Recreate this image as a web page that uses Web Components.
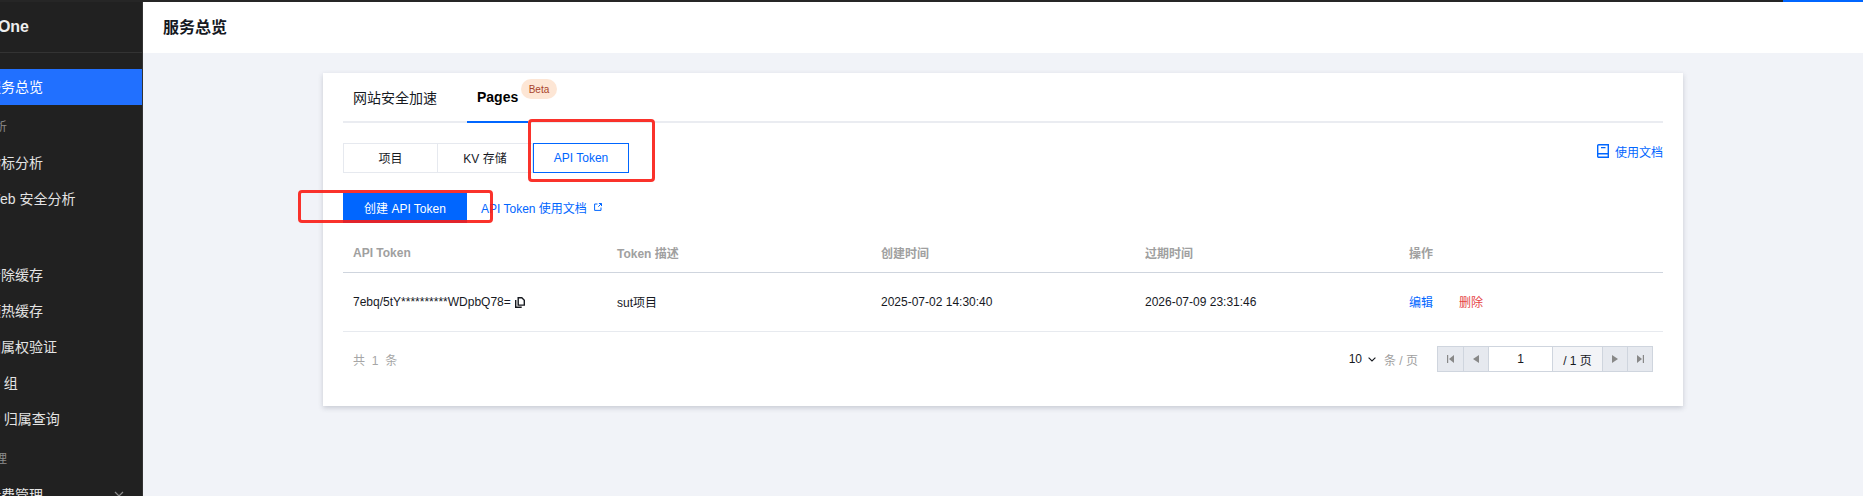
<!DOCTYPE html>
<html lang="zh">
<head>
<meta charset="utf-8">
<title>服务总览</title>
<style>
  html, body { margin: 0; height: 100%; overflow: hidden; }
  body { font-family: "Liberation Sans", "Noto Sans CJK SC", sans-serif; background: #f1f3f8; }
</style>
</head>
<body>
<app-shell>
  <side-nav slot="side">
    <nav-item active>服务总览</nav-item>
    <nav-label>数据分析</nav-label>
    <nav-item>指标分析</nav-item>
    <nav-item>Web 安全分析</nav-item>
    <nav-label></nav-label>
    <nav-item>清除缓存</nav-item>
    <nav-item>预热缓存</nav-item>
    <nav-item>归属权验证</nav-item>
    <nav-item>IP 组</nav-item>
    <nav-item>IP 归属查询</nav-item>
    <nav-label>计费管理</nav-label>
    <nav-item arrow>计费管理</nav-item>
  </side-nav>
  <page-header slot="head">服务总览</page-header>
  <pages-card></pages-card>
</app-shell>
<mark-box style="left:528px;top:119px;width:127px;height:63px"></mark-box>
<mark-box style="left:298px;top:190px;width:195px;height:33px"></mark-box>

<script>
/**
 * Page frame: dark strip on top, sidebar on the left, header and content on the right.
 */
class AppShell extends HTMLElement {
  constructor() {
    super();
    this.attachShadow({ mode: "open" }).innerHTML = `
      <style>
        :host { display: block; height: 100vh; overflow: hidden; }
        .strip { height: 2px; background: #262626; display: flex; justify-content: flex-end; }
        .strip i { width: 80px; background: #0066ff; }
        .body { display: flex; height: calc(100vh - 2px); }
        .main { flex: 1; min-width: 0; }
        .content { padding: 20px 0; }
      </style>
      <div class="strip"><i></i></div>
      <div class="body">
        <slot name="side"></slot>
        <div class="main">
          <slot name="head"></slot>
          <div class="content"><slot></slot></div>
        </div>
      </div>`;
  }
}

class SideNav extends HTMLElement {
  constructor() {
    super();
    this.attachShadow({ mode: "open" }).innerHTML = `
      <style>
        :host { display: block; width: 143px; flex: none; box-sizing: border-box; background: #212121; border-right: 1px solid #333; overflow: hidden; color: #e6e6e6; }
        .logo { height: 50px; display: flex; align-items: center; justify-content: flex-end; width: 29px; font-size: 16px; font-weight: 700; color: #eee; white-space: nowrap; }
        .head { border-bottom: 1px solid #333; }
        .items { padding-top: 16px; }
      </style>
      <div class="head"><div class="logo">One</div></div>
      <div class="items"><slot></slot></div>`;
  }
}

class NavItem extends HTMLElement {
  constructor() {
    super();
    const arrow = this.hasAttribute("arrow")
      ? `<svg width="10" height="6" viewBox="0 0 10 6"><path d="M1 1l4 4 4-4" fill="none" stroke="#8a8a8a" stroke-width="1.2"/></svg>`
      : "";
    this.attachShadow({ mode: "open" }).innerHTML = `
      <style>
        :host { display: flex; align-items: center; justify-content: space-between; height: 36px; box-sizing: border-box; padding-bottom: 2px; margin-left: -13px; padding-right: 18px; font-size: 14px; color: #e4e4e4; white-space: nowrap; }
        :host([active]) { background: #2170ff; color: #fff; }
      </style>
      <span><slot></slot></span>${arrow}`;
  }
}

class NavLabel extends HTMLElement {
  constructor() {
    super();
    this.attachShadow({ mode: "open" }).innerHTML = `
      <style>
        :host { display: flex; align-items: center; height: 40px; margin-left: -41px; font-size: 12px; color: #8c8c8c; white-space: nowrap; }
      </style>
      <slot></slot>`;
  }
}

class PageHeader extends HTMLElement {
  constructor() {
    super();
    this.attachShadow({ mode: "open" }).innerHTML = `
      <style>
        :host { display: flex; align-items: center; height: 51px; box-sizing: border-box; padding: 0 0 3px 20px; background: #fff; font-size: 16px; font-weight: 700; color: #16191f; }
      </style>
      <slot></slot>`;
  }
}

class PagesCard extends HTMLElement {
  constructor() {
    super();
    this.attachShadow({ mode: "open" }).innerHTML = `
      <style>
        :host { display: block; width: 1360px; height: 333px; margin: 0 auto; box-sizing: border-box; padding: 0 20px; background: #fff; box-shadow: 0 2px 5px rgba(54,58,80,.22); color: #16191f; font-size: 12px; }
        .tabs { display: flex; gap: 20px; height: 48px; border-bottom: 2px solid #eaecf1; }
        .tab { position: relative; display: flex; align-items: center; padding: 0 10px; height: 50px; box-sizing: border-box; font-size: 14px; }
        .tab.cn { padding-bottom: 2px; }
        .tab.on { font-weight: 700; color: #000; border-bottom: 2px solid #0066ff; }
        .beta { position: absolute; left: 54px; top: 6px; width: 36px; height: 20px; border-radius: 10px; background: #fde6d5; color: #a8432c; font-size: 10px; font-weight: 400; display: flex; align-items: center; justify-content: center; }
        .bar { display: flex; justify-content: space-between; align-items: flex-start; margin-top: 20px; }
        .seg { display: flex; }
        .seg span { width: 95px; height: 30px; box-sizing: border-box; display: flex; align-items: center; justify-content: center; padding-bottom: 2px; border: 1px solid #e6e9ef; border-left: 0; }
        .seg span:first-child { border-left: 1px solid #e6e9ef; }
        .seg span.on { border: 1px solid #0066ff; color: #0066ff; width: 96px; padding-bottom: 0; }
        .doc { display: flex; align-items: center; gap: 6px; height: 16px; color: #0066ff; }
        .actions { display: flex; align-items: center; gap: 14px; margin-top: 20px; color: #0066ff; }
        .btn { width: 124px; height: 30px; box-sizing: border-box; padding-bottom: 2px; background: #0066ff; color: #fff; display: flex; align-items: center; justify-content: center; }
        .ext { display: inline-flex; align-items: center; gap: 7px; padding-bottom: 2px; }
        .table { margin-top: 10px; }
        .row { display: grid; grid-template-columns: repeat(5, 264px); align-items: center; }
        .row > div { padding-left: 10px; display: flex; align-items: center; }
        .row.th { height: 39px; border-bottom: 1px solid #cfd5de; color: #a0a0a0; font-weight: 700; }
        .row.td { height: 58px; border-bottom: 1px solid #e7eaef; }
        .row.td .cn { padding-bottom: 2px; }
        .copy { margin-left: 4px; margin-top: 1px; }
        .edit { color: #0066ff; }
        .del { color: #e54545; margin-left: 26px; }
        .foot { display: flex; justify-content: space-between; align-items: center; padding: 14px 10px 0; color: #a6a6a6; }
        .total { word-spacing: 3.5px; }
      </style>
      <div class="tabs">
        <div class="tab cn">网站安全加速</div>
        <div class="tab on">Pages<span class="beta">Beta</span></div>
      </div>
      <div class="bar">
        <div class="seg"><span>项目</span><span>KV 存储</span><span class="on">API Token</span></div>
        <div class="doc">
          <svg width="12" height="14" viewBox="0 0 12 14"><path d="M1.700.7h9.600v12.600H1.700A1 1 0 0 1 .7 12.300V1.700a1 1 0 0 1 1-1z" fill="none" stroke="#0066ff" stroke-width="1.4"/><path d="M1 9.800h10M4 3.600h4.500" stroke="#0066ff" stroke-width="1.4"/></svg>
          使用文档
        </div>
      </div>
      <div class="actions">
        <div class="btn">创建 API Token</div>
        <span class="ext">API Token 使用文档
          <svg width="8" height="8" viewBox="0 0 8 8"><path d="M3.500 1H.6v6.400H7V4.500M4.300 3.700L7.400.6M4.900.5h2.600v2.600" fill="none" stroke="#0066ff"/></svg>
        </span>
      </div>
      <div class="table">
        <div class="row th"><div>API Token</div><div>Token 描述</div><div>创建时间</div><div>过期时间</div><div>操作</div></div>
        <div class="row td">
          <div>7ebq/5tY**********WDpbQ78=
            <svg class="copy" width="10" height="11" viewBox="0 0 10 11"><path d="M3.200.7h3.600l2.500 2.500v4.900H3.200z" fill="none" stroke="#16191f" stroke-width="1.400"/><path d="M.7 3v7.300h6" fill="none" stroke="#16191f" stroke-width="1.400"/></svg>
          </div>
          <div class="cn">sut项目</div>
          <div>2025-07-02 14:30:40</div>
          <div>2026-07-09 23:31:46</div>
          <div class="cn"><span class="edit">编辑</span><span class="del">删除</span></div>
        </div>
      </div>
      <div class="foot"><span class="total">共 1 条</span><token-pager></token-pager></div>`;
  }
}

class TokenPager extends HTMLElement {
  constructor() {
    super();
    this.attachShadow({ mode: "open" }).innerHTML = `
      <style>
        :host { display: flex; align-items: center; color: #a0a0a0; font-size: 12px; }
        .size { color: #16191f; display: flex; align-items: center; gap: 6px; }
        .unit { margin: 0 19px 0 8px; }
        .box { display: flex; height: 26px; box-sizing: border-box; border: 1px solid #cfd5de; color: #16191f; }
        .box > span { display: flex; align-items: center; justify-content: center; border-left: 1px solid #cfd5de; box-sizing: border-box; }
        .box > span:first-child { border-left: 0; }
        .b { width: 25px; background: #e6e9ef; }
        .num { width: 64px; background: #fff; }
        .tot { width: 50px; background: #f3f4f7; }
      </style>
      <span class="size">10 <svg width="8" height="5" viewBox="0 0 8 5"><path d="M.6.6L4 4l3.400-3.400" fill="none" stroke="#16191f" stroke-width="1.100"/></svg></span>
      <span class="unit">条 / 页</span>
      <div class="box">
        <span class="b"><svg width="7" height="8" viewBox="0 0 7 8"><path d="M0 0h1.200v8H0zM7 0v8L2 4z" fill="#888"/></svg></span>
        <span class="b"><svg width="6" height="8" viewBox="0 0 6 8"><path d="M6 0v8L0 4z" fill="#888"/></svg></span>
        <span class="num">1</span>
        <span class="tot">/ 1 页</span>
        <span class="b"><svg width="6" height="8" viewBox="0 0 6 8"><path d="M0 0v8l6-4z" fill="#888"/></svg></span>
        <span class="b"><svg width="7" height="8" viewBox="0 0 7 8"><path d="M7 0H5.800v8H7zM0 0v8l5-4z" fill="#888"/></svg></span>
      </div>`;
  }
}

/** Red hand-drawn highlight that lies over the screenshot. */
class MarkBox extends HTMLElement {
  constructor() {
    super();
    this.attachShadow({ mode: "open" }).innerHTML = `
      <style>
        :host { position: absolute; box-sizing: border-box; border: 3px solid rgba(250, 28, 20, .9); border-radius: 4px; pointer-events: none; }
      </style>`;
  }
}

customElements.define("app-shell", AppShell);
customElements.define("side-nav", SideNav);
customElements.define("nav-item", NavItem);
customElements.define("nav-label", NavLabel);
customElements.define("page-header", PageHeader);
customElements.define("pages-card", PagesCard);
customElements.define("token-pager", TokenPager);
customElements.define("mark-box", MarkBox);
</script>
</body>
</html>
